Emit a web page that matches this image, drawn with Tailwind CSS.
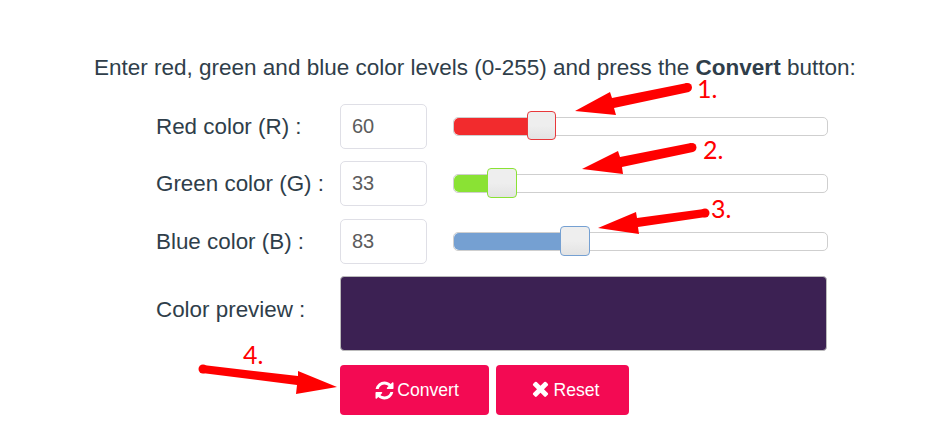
<!DOCTYPE html>
<html lang="en">
<head>
    <meta charset="UTF-8">
    <title>RGB to Hex</title>
    <script src="https://cdn.jsdelivr.net/npm/@tailwindcss/browser@4"></script>
</head>
<body class="bg-white overflow-hidden">
<div class="relative h-[423px] w-[946px] overflow-hidden font-['Liberation_Sans',Arial,sans-serif] text-[#2f3e4a]">
    <p class="pt-[55px] pl-[94px] text-[22.5px] leading-[26px] whitespace-nowrap">Enter red, green and blue color levels (0-255) and press the <b>Convert</b> button:</p>

    <div class="ml-[156px] mt-[23px] w-[672px] text-[22.4px]">
        <!-- Red -->
        <div class="flex items-center h-[45px]">
            <label class="w-[184px] shrink-0">Red color (R) :</label>
            <div class="w-[87px] h-[45px] shrink-0 rounded-[5px] border border-[#dfdfe6] pl-[11px] text-[20px] leading-[43px] text-[#5c5c5c]">60</div>
            <div class="relative ml-[26px] h-[19px] w-[375px] rounded-[5px] border border-[#cfcfcf] bg-white">
                <div class="h-full w-[78px] rounded-l-[5px] bg-[#f22b2d]"></div>
                <div class="absolute left-[73px] top-[-7px] h-[29px] w-[29px] rounded-[4px] border border-[#e8383b] bg-[linear-gradient(#eeeeee_50%,#e3e3e3)]"></div>
            </div>
        </div>
        <!-- Green -->
        <div class="flex items-center h-[45px] mt-[12px]">
            <label class="w-[184px] shrink-0">Green color (G) :</label>
            <div class="w-[87px] h-[45px] shrink-0 rounded-[5px] border border-[#dfdfe6] pl-[11px] text-[20px] leading-[43px] text-[#5c5c5c]">33</div>
            <div class="relative ml-[26px] h-[19px] w-[375px] rounded-[5px] border border-[#cfcfcf] bg-white">
                <div class="h-full w-[38px] rounded-l-[5px] bg-[#8ae234]"></div>
                <div class="absolute left-[33px] top-[-7px] h-[30px] w-[30px] rounded-[4px] border border-[#8ae234] bg-[linear-gradient(#eeeeee_50%,#e3e3e3)]"></div>
            </div>
        </div>
        <!-- Blue -->
        <div class="flex items-center h-[45px] mt-[13px]">
            <label class="w-[184px] shrink-0">Blue color (B) :</label>
            <div class="w-[87px] h-[45px] shrink-0 rounded-[5px] border border-[#dfdfe6] pl-[11px] text-[20px] leading-[43px] text-[#5c5c5c]">83</div>
            <div class="relative ml-[26px] h-[19px] w-[375px] rounded-[5px] border border-[#cfcfcf] bg-white">
                <div class="h-full w-[112px] rounded-l-[5px] bg-[#75a0d2]"></div>
                <div class="absolute left-[106px] top-[-7px] h-[30px] w-[30px] rounded-[4px] border border-[#75a0d2] bg-[linear-gradient(#eeeeee_50%,#e3e3e3)]"></div>
            </div>
        </div>
        <!-- Preview -->
        <div class="flex items-center h-[75px] mt-[12px]">
            <label class="w-[184px] shrink-0 mb-[8px]">Color preview :</label>
            <div class="h-[75px] w-[487px] rounded-[4px] border border-[#bbb] bg-[#3c2153]"></div>
        </div>
        <!-- Buttons -->
        <div class="flex gap-[7px] mt-[14px] ml-[184px] text-[17.6px] text-white">
            <button class="flex items-center justify-center gap-[2px] pl-[4px] h-[50px] w-[149px] rounded-[4px] bg-[#f30a53]">
                <svg class="h-[21px] w-[21px] fill-white" viewBox="0 0 1792 1792"><path d="M1639 1056q0 5-1 7-64 268-268 434.5t-478 166.5q-146 0-282.5-55t-243.5-157l-129 129q-19 19-45 19t-45-19-19-45v-448q0-26 19-45t45-19h448q26 0 45 19t19 45-19 45l-137 137q71 66 161 102t187 36q134 0 250-65t186-179q11-17 53-117 8-23 30-23h192q13 0 22.5 9.5t9.5 22.5zm25-800v448q0 26-19 45t-45 19h-448q-26 0-45-19t-19-45 19-45l138-138q-148-137-349-137-134 0-250 65t-186 179q-11 17-53 117-8 23-30 23h-199q-13 0-22.5-9.5t-9.5-22.5v-7q65-268 270-434.5t480-166.5q146 0 284 55.5t245 156.5l130-129q19-19 45-19t45 19 19 45z"/></svg>
                Convert
            </button>
            <button class="flex items-center justify-center gap-[2px] pl-[3px] h-[50px] w-[133px] rounded-[4px] bg-[#f30a53]">
                <svg class="h-[23px] w-[23px] fill-white mb-[3px]" viewBox="0 0 1792 1792"><path d="M1490 1322q0 40-28 68l-136 136q-28 28-68 28t-68-28l-294-294-294 294q-28 28-68 28t-68-28l-136-136q-28-28-28-68t28-68l294-294-294-294q-28-28-28-68t28-68l136-136q28-28 68-28t68 28l294 294 294-294q28-28 68-28t68 28l136 136q28 28 28 68t-28 68l-294 294 294 294q28 28 28 68z"/></svg>
                Reset
            </button>
        </div>
    </div>

    <!-- red annotations drawn over the screenshot -->
    <svg class="absolute left-0 top-0 pointer-events-none" width="946" height="423" viewBox="0 0 946 423">
        <g fill="#ff0000" stroke="none">
            <polygon points="575,111 610,92 612,98 687,83 689,92 614,108 616,115"/>
            <circle cx="687.500" cy="87.500" r="4.500"/>
            <polygon points="582,169 618,151 620,157 691,143 693,152 622,167 623,174"/>
            <circle cx="692" cy="147.500" r="4.500"/>
            <polygon points="598,228 636,212 637,218 704,209 706,217 638,227 639,234"/>
            <circle cx="705" cy="213" r="4.500"/>
            <polygon points="337,387 298,371 298,376 203,365 202,373 297,385 296,394"/>
            <circle cx="203" cy="369" r="4.500"/>
        </g>
        <g fill="#ff0000" font-family="Lato,sans-serif" font-size="25">
            <text x="697" y="98">1.</text>
            <text x="703" y="159">2.</text>
            <text x="711" y="218">3.</text>
            <text x="243" y="364">4.</text>
        </g>
    </svg>
</div>
</body>
</html>
